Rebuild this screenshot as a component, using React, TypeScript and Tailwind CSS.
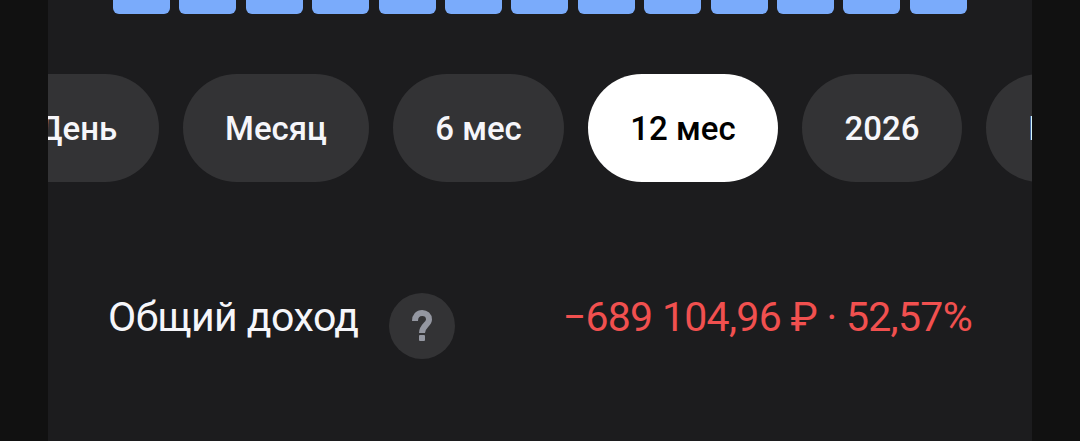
const bars = Array.from({ length: 13 }, (_, i) => i);

const periods = [
  { label: "День", width: "w-[163px]" },
  { label: "Месяц", width: "w-[186px]" },
  { label: "6 мес", width: "w-[171px]" },
  { label: "12 мес", width: "w-[190px]", active: true },
  { label: "2026", width: "w-[160px]" },
  { label: "Весь", width: "w-[159px]" },
];

function HelpIcon() {
  return (
    <svg className="size-[66px]" viewBox="0 0 66 66" fill="none">
      <path
        d="M26 28C26 23 29 20 33.2 20C37 20 40 22.6 40 26.4C40 31.6 33 32.6 33 40"
        stroke="#9497a1"
        strokeWidth={6}
      />
      <rect x="30" y="42" width="6" height="6" rx="1" fill="#9497a1" />
    </svg>
  );
}

export default function App() {
  return (
    <div className="h-[441px] w-[1080px] bg-[#111111] px-12 font-['Roboto',sans-serif]">
      <main className="flex h-full flex-col overflow-hidden bg-[#1c1c1e]">
        {/* ── Chart bars ── */}
        <div className="flex h-[14px] shrink-0 justify-between pr-[65px] pl-[65px]">
          {bars.map((bar) => (
            <div key={bar} className="w-[57px] rounded-b-[6px] bg-[#7aabfb]" />
          ))}
        </div>

        {/* ── Period filter ── */}
        <div className="-ml-[52px] mt-[60px] flex shrink-0 gap-6">
          {periods.map((p) => (
            <button
              key={p.label}
              className={`h-[108px] shrink-0 rounded-full pt-[2px] text-[33px] font-medium whitespace-nowrap ${p.width} ${
                p.active ? "bg-white text-black" : "bg-[#333335] text-[#f6f6fa]"
              }`}
            >
              {p.label}
            </button>
          ))}
        </div>

        {/* ── Total income ── */}
        <div className="mt-[111px] flex h-[66px] shrink-0 items-start justify-between pr-[60px] pl-[60px] text-[41px] leading-[48px]">
          <div className="flex items-start gap-[30px]">
            <span className="tracking-[-0.52px] text-[#f6f6fa]">Общий доход</span>
            <button
              className="size-[66px] rounded-full bg-[#333335]"
              aria-label="Подсказка"
            >
              <HelpIcon />
            </button>
          </div>
          <span className="whitespace-nowrap tracking-[-0.7px] text-[#f1504f]">−689 104,96 ₽ · 52,57%</span>
        </div>
      </main>
    </div>
  );
}
